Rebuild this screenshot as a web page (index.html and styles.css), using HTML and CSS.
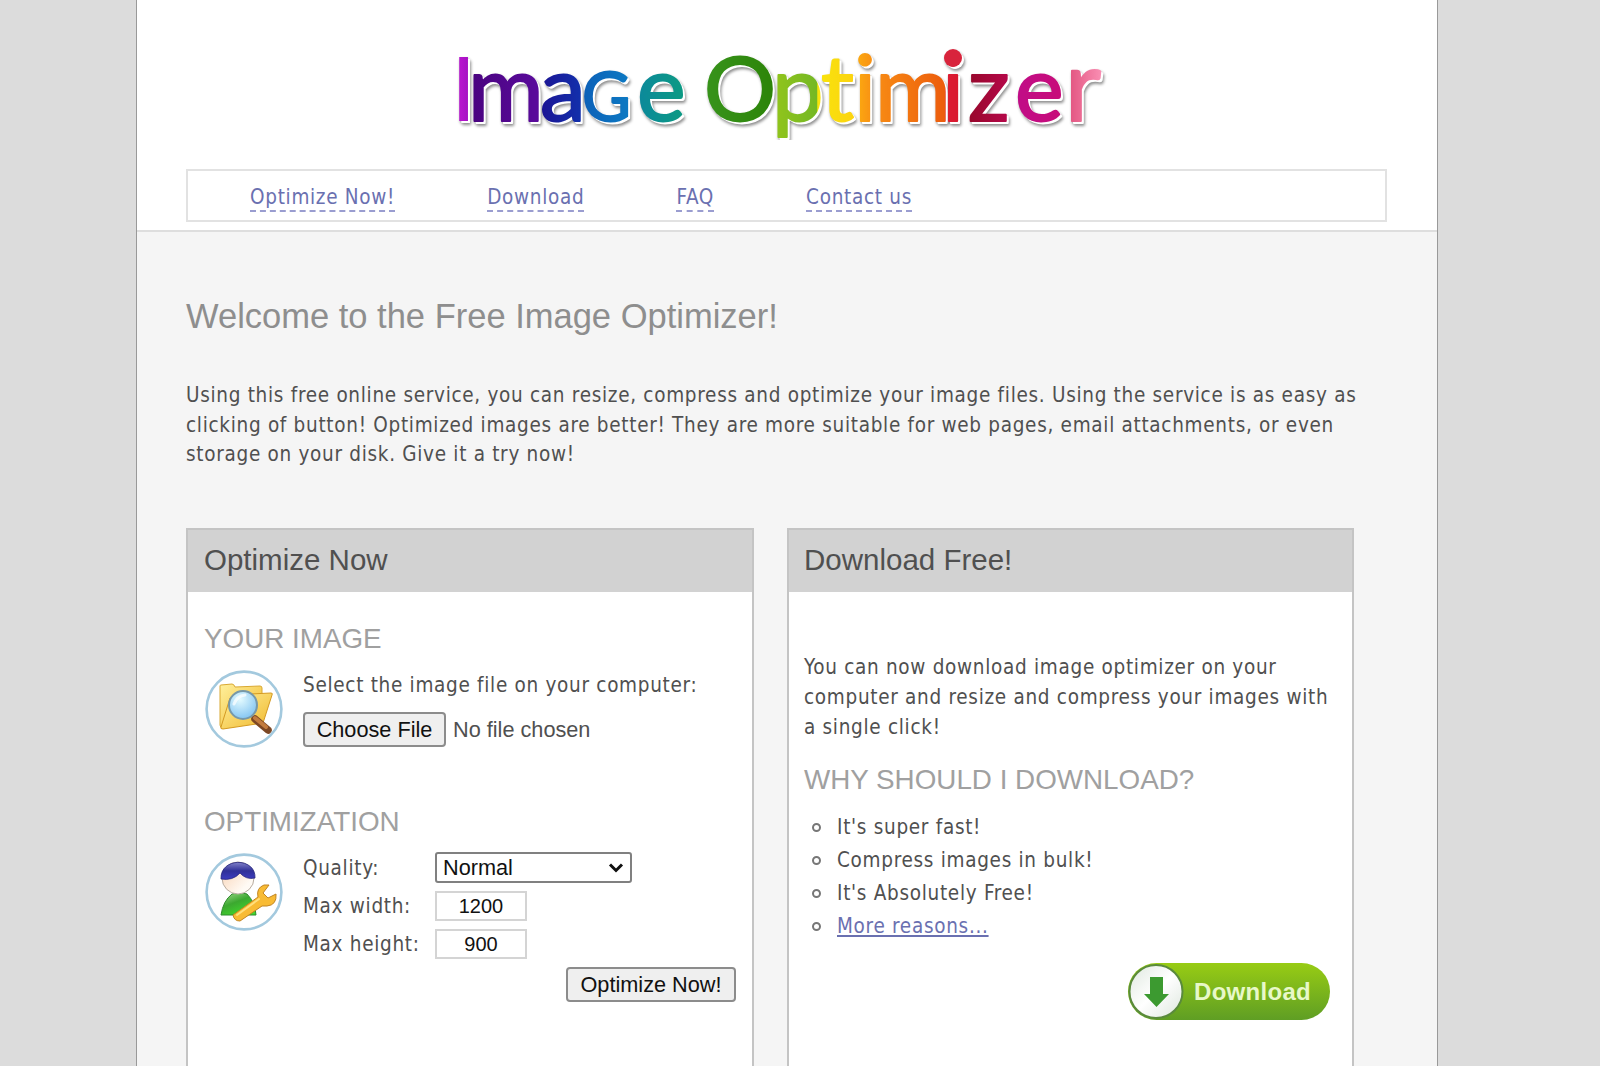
FILE: index.html
```html
<!DOCTYPE html>
<html lang="en">
<head>
    <meta charset="UTF-8">
    <meta name="viewport" content="width=device-width, initial-scale=1.0">
    <title>Image Optimizer</title>
    <link rel="stylesheet" href="styles.css">
</head>
<body>
    <div class="page">
        <header class="header">
            <svg class="logo" width="670" height="130" viewBox="0 -30 670 130">
                <defs>
                    <linearGradient id="rainbow" gradientUnits="userSpaceOnUse" x1="0" y1="0" x2="670" y2="0">
                        <stop offset="0.02" stop-color="#b414cc"/>
                        <stop offset="0.034" stop-color="#a010c0"/>
                        <stop offset="0.036" stop-color="#4a0480"/>
                        <stop offset="0.136" stop-color="#5a0a9c"/>
                        <stop offset="0.138" stop-color="#1c1494"/>
                        <stop offset="0.199" stop-color="#1230ac"/>
                        <stop offset="0.201" stop-color="#0c60b8"/>
                        <stop offset="0.279" stop-color="#0c7cc4"/>
                        <stop offset="0.281" stop-color="#0c889c"/>
                        <stop offset="0.36" stop-color="#0c9c80"/>
                        <stop offset="0.38" stop-color="#38941c"/>
                        <stop offset="0.489" stop-color="#2c8408"/>
                        <stop offset="0.491" stop-color="#90c41c"/>
                        <stop offset="0.55" stop-color="#74b824"/>
                        <stop offset="0.552" stop-color="#f8e40c"/>
                        <stop offset="0.605" stop-color="#fcd410"/>
                        <stop offset="0.609" stop-color="#fcac10"/>
                        <stop offset="0.637" stop-color="#f88c14"/>
                        <stop offset="0.742" stop-color="#ec5c0c"/>
                        <stop offset="0.743" stop-color="#dc1c34"/>
                        <stop offset="0.77" stop-color="#d8182c"/>
                        <stop offset="0.772" stop-color="#940828"/>
                        <stop offset="0.84" stop-color="#b8084c"/>
                        <stop offset="0.845" stop-color="#c00c88"/>
                        <stop offset="0.92" stop-color="#c80c78"/>
                        <stop offset="0.923" stop-color="#e0507c"/>
                        <stop offset="0.98" stop-color="#fc94b8"/>
                    </linearGradient>
                </defs>
                <g class="logo-art">
                    <text class="logo-text" y="81"><tspan class="thin" x="3">I</tspan><tspan x="20 92">ma</tspan><tspan class="mid" x="134">G</tspan><tspan x="189">e</tspan> <tspan class="cap" x="256">O</tspan><tspan x="324 373 406 427 494 520 567">ptimize</tspan><tspan class="big" x="617">r</tspan></text>
                    <circle cx="505" cy="18" r="9" fill="#d8243c"/>
                </g>
            </svg>
            <nav class="nav">
                <a href="#">Optimize Now!</a>
                <a href="#">Download</a>
                <a href="#">FAQ</a>
                <a href="#">Contact us</a>
            </nav>
        </header>

        <main class="main">
            <h1>Welcome to the Free Image Optimizer!</h1>
            <p class="intro">Using this free online service, you can resize, compress and optimize your image files. Using the service is as easy as<br>clicking of button! Optimized images are better! They are more suitable for web pages, email attachments, or even<br>storage on your disk. Give it a try now!</p>

            <div class="panels">
                <section class="panel">
                    <h2>Optimize Now</h2>
                    <form class="panel-body">
                        <h3>YOUR IMAGE</h3>
                        <div class="step step-file">
                            <svg class="step-icon" width="78" height="78" viewBox="0 0 78 78">
                                <defs>
                                    <linearGradient id="folder" x1="0" y1="0" x2="1" y2="1">
                                        <stop offset="0" stop-color="#fff09c"/>
                                        <stop offset="1" stop-color="#f0b82c"/>
                                    </linearGradient>
                                    <radialGradient id="lens" cx="0.4" cy="0.3" r="0.8">
                                        <stop offset="0" stop-color="#e4fbff"/>
                                        <stop offset="1" stop-color="#78bef0"/>
                                    </radialGradient>
                                </defs>
                                <circle cx="39" cy="39" r="37.4" fill="#fff" stroke="#a3c9de" stroke-width="2.6"/>
                                <path d="M15 16q0-1 1-1l11-1q2 0 3 3l25-1q2 0 2 2v6L44 54l-26 4q-3 0-3-3z" fill="url(#folder)" stroke="#d9a832" stroke-width="1"/>
                                <path d="M16 57l9-29 20-4 21-1q2 0 1 2l-9 28-40 6q-3 0-2-2z" fill="url(#folder)" stroke="#d49a22" stroke-width="1"/>
                                <path d="M50 49l13 11" stroke="#7c4724" stroke-width="7.500" stroke-linecap="round"/>
                                <path d="M50 48l11 9" stroke="#c27b3e" stroke-width="4" stroke-linecap="round"/>
                                <circle cx="38" cy="35" r="14" fill="url(#lens)" stroke="#7798a8" stroke-width="2"/>
                                <path d="M29 34q3-8 11-9" fill="none" stroke="#fff" stroke-width="3" stroke-linecap="round" opacity="0.7"/>
                            </svg>
                            <div class="file-fields">
                                <label>Select the image file on your computer:</label>
                                <div class="file-row">
                                    <button type="button" class="button choose">Choose File</button>
                                    <span>No file chosen</span>
                                </div>
                            </div>
                        </div>

                        <h3>OPTIMIZATION</h3>
                        <div class="step">
                            <svg class="step-icon" width="78" height="78" viewBox="0 0 78 78">
                                <defs>
                                    <linearGradient id="skin" x1="0" y1="0" x2="1" y2="1">
                                        <stop offset="0" stop-color="#f8cfae"/>
                                        <stop offset="0.75" stop-color="#fffaf4"/>
                                    </linearGradient>
                                    <linearGradient id="hair" x1="0" y1="0" x2="0" y2="1">
                                        <stop offset="0" stop-color="#8080c8"/>
                                        <stop offset="0.5" stop-color="#303098"/>
                                        <stop offset="1" stop-color="#3c3cc0"/>
                                    </linearGradient>
                                    <linearGradient id="shirt" x1="0" y1="0" x2="0.6" y2="1">
                                        <stop offset="0" stop-color="#a8dc94"/>
                                        <stop offset="0.5" stop-color="#3ca830"/>
                                        <stop offset="1" stop-color="#40d82c"/>
                                    </linearGradient>
                                </defs>
                                <circle cx="39" cy="39" r="37.4" fill="#fff" stroke="#a3c9de" stroke-width="2.6"/>
                                <path d="M16 62q2-14 11-21 8-3 15 0 8 8 9 21z" fill="url(#shirt)" stroke="#2f8a2c" stroke-width="1"/>
                                <circle cx="33" cy="25" r="16" fill="url(#skin)" stroke="#b8aca0" stroke-width="1"/>
                                <path d="M16 26C15 4 51 4 50 25q-9 2-15-5-7 8-19 6z" fill="url(#hair)" stroke="#26267c" stroke-width="0.800"/>
                                <path d="M28 62l25-18q-2-9 6-12l5 0-6 8 5 5 8-4q1 11-9 12h-5L35 68q-6 0-7-6z" fill="#f8bb34" stroke="#c28522" stroke-width="1"/>
                                <path d="M32 62l22-16" stroke="#ffdf7c" stroke-width="2" stroke-linecap="round"/>
                            </svg>
                            <div class="fields">
                                <div class="field field-quality">
                                    <label>Quality:</label>
                                    <div class="select">
                                        <span>Normal</span>
                                        <svg width="16" height="11" viewBox="0 0 16 11"><path d="M2 2.500l6 6 6-6" fill="none" stroke="#111" stroke-width="3"/></svg>
                                    </div>
                                </div>
                                <div class="field">
                                    <label>Max width:</label>
                                    <input type="text" value="1200">
                                </div>
                                <div class="field">
                                    <label>Max height:</label>
                                    <input type="text" value="900">
                                </div>
                            </div>
                        </div>
                        <div class="actions">
                            <button type="button" class="button submit">Optimize Now!</button>
                        </div>
                    </form>
                </section>

                <section class="panel panel-download">
                    <h2>Download Free!</h2>
                    <div class="panel-body">
                        <p class="about">You can now download image optimizer on your<br>computer and resize and compress your images with<br>a single click!</p>
                        <h3 class="why">WHY SHOULD I DOWNLOAD?</h3>
                        <ul class="reasons">
                            <li>It's super fast!</li>
                            <li>Compress images in bulk!</li>
                            <li>It's Absolutely Free!</li>
                            <li><a href="#">More reasons...</a></li>
                        </ul>
                        <div class="download-row">
                            <a class="download" href="#">
                                <svg width="56" height="57" viewBox="0 0 56 57">
                                    <defs>
                                        <linearGradient id="disc" x1="0" y1="0" x2="1" y2="1">
                                            <stop offset="0" stop-color="#dfe8df"/>
                                            <stop offset="0.5" stop-color="#fff"/>
                                            <stop offset="1" stop-color="#dde6dd"/>
                                        </linearGradient>
                                    </defs>
                                    <circle cx="28" cy="28.500" r="26.500" fill="url(#disc)" stroke="#5a8a3c" stroke-width="2"/>
                                    <path d="M22 14h13v17h6L28.500 44 16 31h6z" fill="#3c9a30"/>
                                </svg>
                                <span>Download</span>
                            </a>
                        </div>
                    </div>
                </section>
            </div>
        </main>
    </div>
</body>
</html>
```
FILE: styles.css
```css
* {
    box-sizing: border-box;
}
body {
    margin: 0;
    background-color: #dcdcdc;
    font-family: "DejaVu Sans Condensed", "DejaVu Sans", Tahoma, sans-serif;
    font-stretch: condensed;
    font-size: 20.5px;
    letter-spacing: 0.7px;
    color: #505050;
}
h1, h2, h3, p, ul {
    margin: 0;
    padding: 0;
    font-weight: normal;
}
h1, h2, h3 {
    font-family: "Liberation Sans", Arial, sans-serif;
    letter-spacing: 0;
}
a {
    color: #6a70b0;
}
.page {
    width: 1302px;
    height: 1066px;
    margin-left: 136px;
    background-color: #f5f5f5;
    border: solid #999;
    border-width: 0 1px;
}
.header {
    height: 232px;
    padding: 10px 50px 0 49px;
    background-color: #fff;
    border-bottom: 2px solid #dedede;
}
.logo {
    display: block;
    margin: 0 0 29px 262px;
}
.logo-art {
    filter: drop-shadow(2px 2px 0 #fff) drop-shadow(1px 2px 1.500px rgba(0, 0, 0, 0.45));
}
.logo-text {
    font-family: Lato, sans-serif;
    font-size: 92px;
    letter-spacing: 0;
    fill: url(#rainbow);
    stroke: url(#rainbow);
    stroke-width: 2px;
    stroke-linejoin: round;
}
.logo-text .cap {
    font-size: 90px;
}
.logo-text .thin {
    font-size: 90px;
    stroke-width: 0;
}
.logo-text .mid {
    font-size: 67px;
}
.logo-text .big {
    font-size: 99px;
}
.nav {
    display: flex;
    gap: 92px;
    height: 53px;
    padding: 12px 62px 0;
    border: 2px solid #e2e2e2;
}
.nav a {
    height: 29px;
    line-height: 29px;
    text-decoration: none;
    border-bottom: 2px dashed #9a9dd0;
}
.main {
    padding: 62px 49px 0;
}
h1 {
    font-size: 34.5px;
    line-height: 44px;
    color: #8e8e8e;
}
.intro {
    margin-top: 43px;
    line-height: 29.7px;
    white-space: nowrap;
}
.panels {
    display: flex;
    gap: 33px;
    margin-top: 58px;
}
.panel {
    width: 568px;
    height: 538px;
    background-color: #fff;
    border: 2px solid #c4c4c4;
    border-bottom: 0;
}
.panel-download {
    width: 567px;
}
h2 {
    height: 62px;
    padding-left: 16px;
    font-size: 29.5px;
    line-height: 60px;
    color: #505050;
    background-color: #d2d2d2;
}
.panel-body {
    padding: 31px 16px 0;
}
.panel-download h2 {
    padding-left: 15px;
}
.panel-download .panel-body {
    padding-left: 15px;
}
h3 {
    font-size: 27.8px;
    line-height: 32px;
    color: #a0a0a0;
}
.step {
    display: flex;
    gap: 20px;
    height: 100px;
    margin-top: 15px;
    padding-left: 1px;
}
.step-file {
    height: 136px;
}
.file-fields label {
    display: block;
    line-height: 31px;
    white-space: nowrap;
}
.file-row {
    display: flex;
    align-items: center;
    gap: 7px;
    margin-top: 11px;
}
.button {
    height: 35px;
    padding: 0;
    border: 2px solid #8c8c8c;
    border-radius: 4px;
    background-color: #efefef;
    font-family: "Liberation Sans", Arial, sans-serif;
    font-size: 21.7px;
    color: #111;
}
.choose {
    width: 143px;
}
.file-row span {
    font-family: "Liberation Sans", Arial, sans-serif;
    font-size: 21.7px;
    letter-spacing: 0;
}
.fields {
    display: flex;
    flex-direction: column;
    gap: 8px;
    margin-top: -1px;
}
.field {
    display: flex;
    align-items: center;
    height: 30px;
}
.field-quality {
    height: 31px;
}
.field label {
    width: 132px;
    white-space: nowrap;
}
.field input {
    width: 92px;
    height: 30px;
    padding: 0;
    border: 2px solid #d4d4d4;
    text-align: center;
    font-family: "Liberation Sans", Arial, sans-serif;
    font-size: 20px;
    color: #111;
}
.select {
    display: flex;
    align-items: center;
    justify-content: space-between;
    width: 197px;
    height: 31px;
    padding: 0 6px;
    border: 2px solid #808080;
    border-radius: 3px;
    font-family: "Liberation Sans", Arial, sans-serif;
    font-size: 21.7px;
    letter-spacing: 0;
    color: #111;
}
.actions {
    display: flex;
    justify-content: flex-end;
    margin-top: 14px;
}
.submit {
    width: 170px;
}
.about {
    margin-top: 30px;
    line-height: 29.7px;
    white-space: nowrap;
}
.why {
    margin-top: 22px;
    white-space: nowrap;
}
.reasons {
    margin-top: 15px;
    padding-left: 8px;
    list-style: none;
    line-height: 33px;
}
.reasons li {
    display: flex;
    align-items: center;
    gap: 16px;
}
.reasons li::before {
    content: "";
    width: 5px;
    height: 5px;
    border: 2px solid #777;
    border-radius: 50%;
}
.download-row {
    display: flex;
    justify-content: flex-end;
    margin-top: 20px;
    padding-right: 6px;
}
.download {
    display: flex;
    align-items: center;
    width: 202px;
    height: 57px;
    border-radius: 29px;
    background: linear-gradient(#98cc14, #5f9e24);
    text-decoration: none;
}
.download span {
    margin-left: 10px;
    font: bold 24px "Liberation Sans", Arial, sans-serif;
    letter-spacing: 0.3px;
    color: #e8f8c8;
}
```
